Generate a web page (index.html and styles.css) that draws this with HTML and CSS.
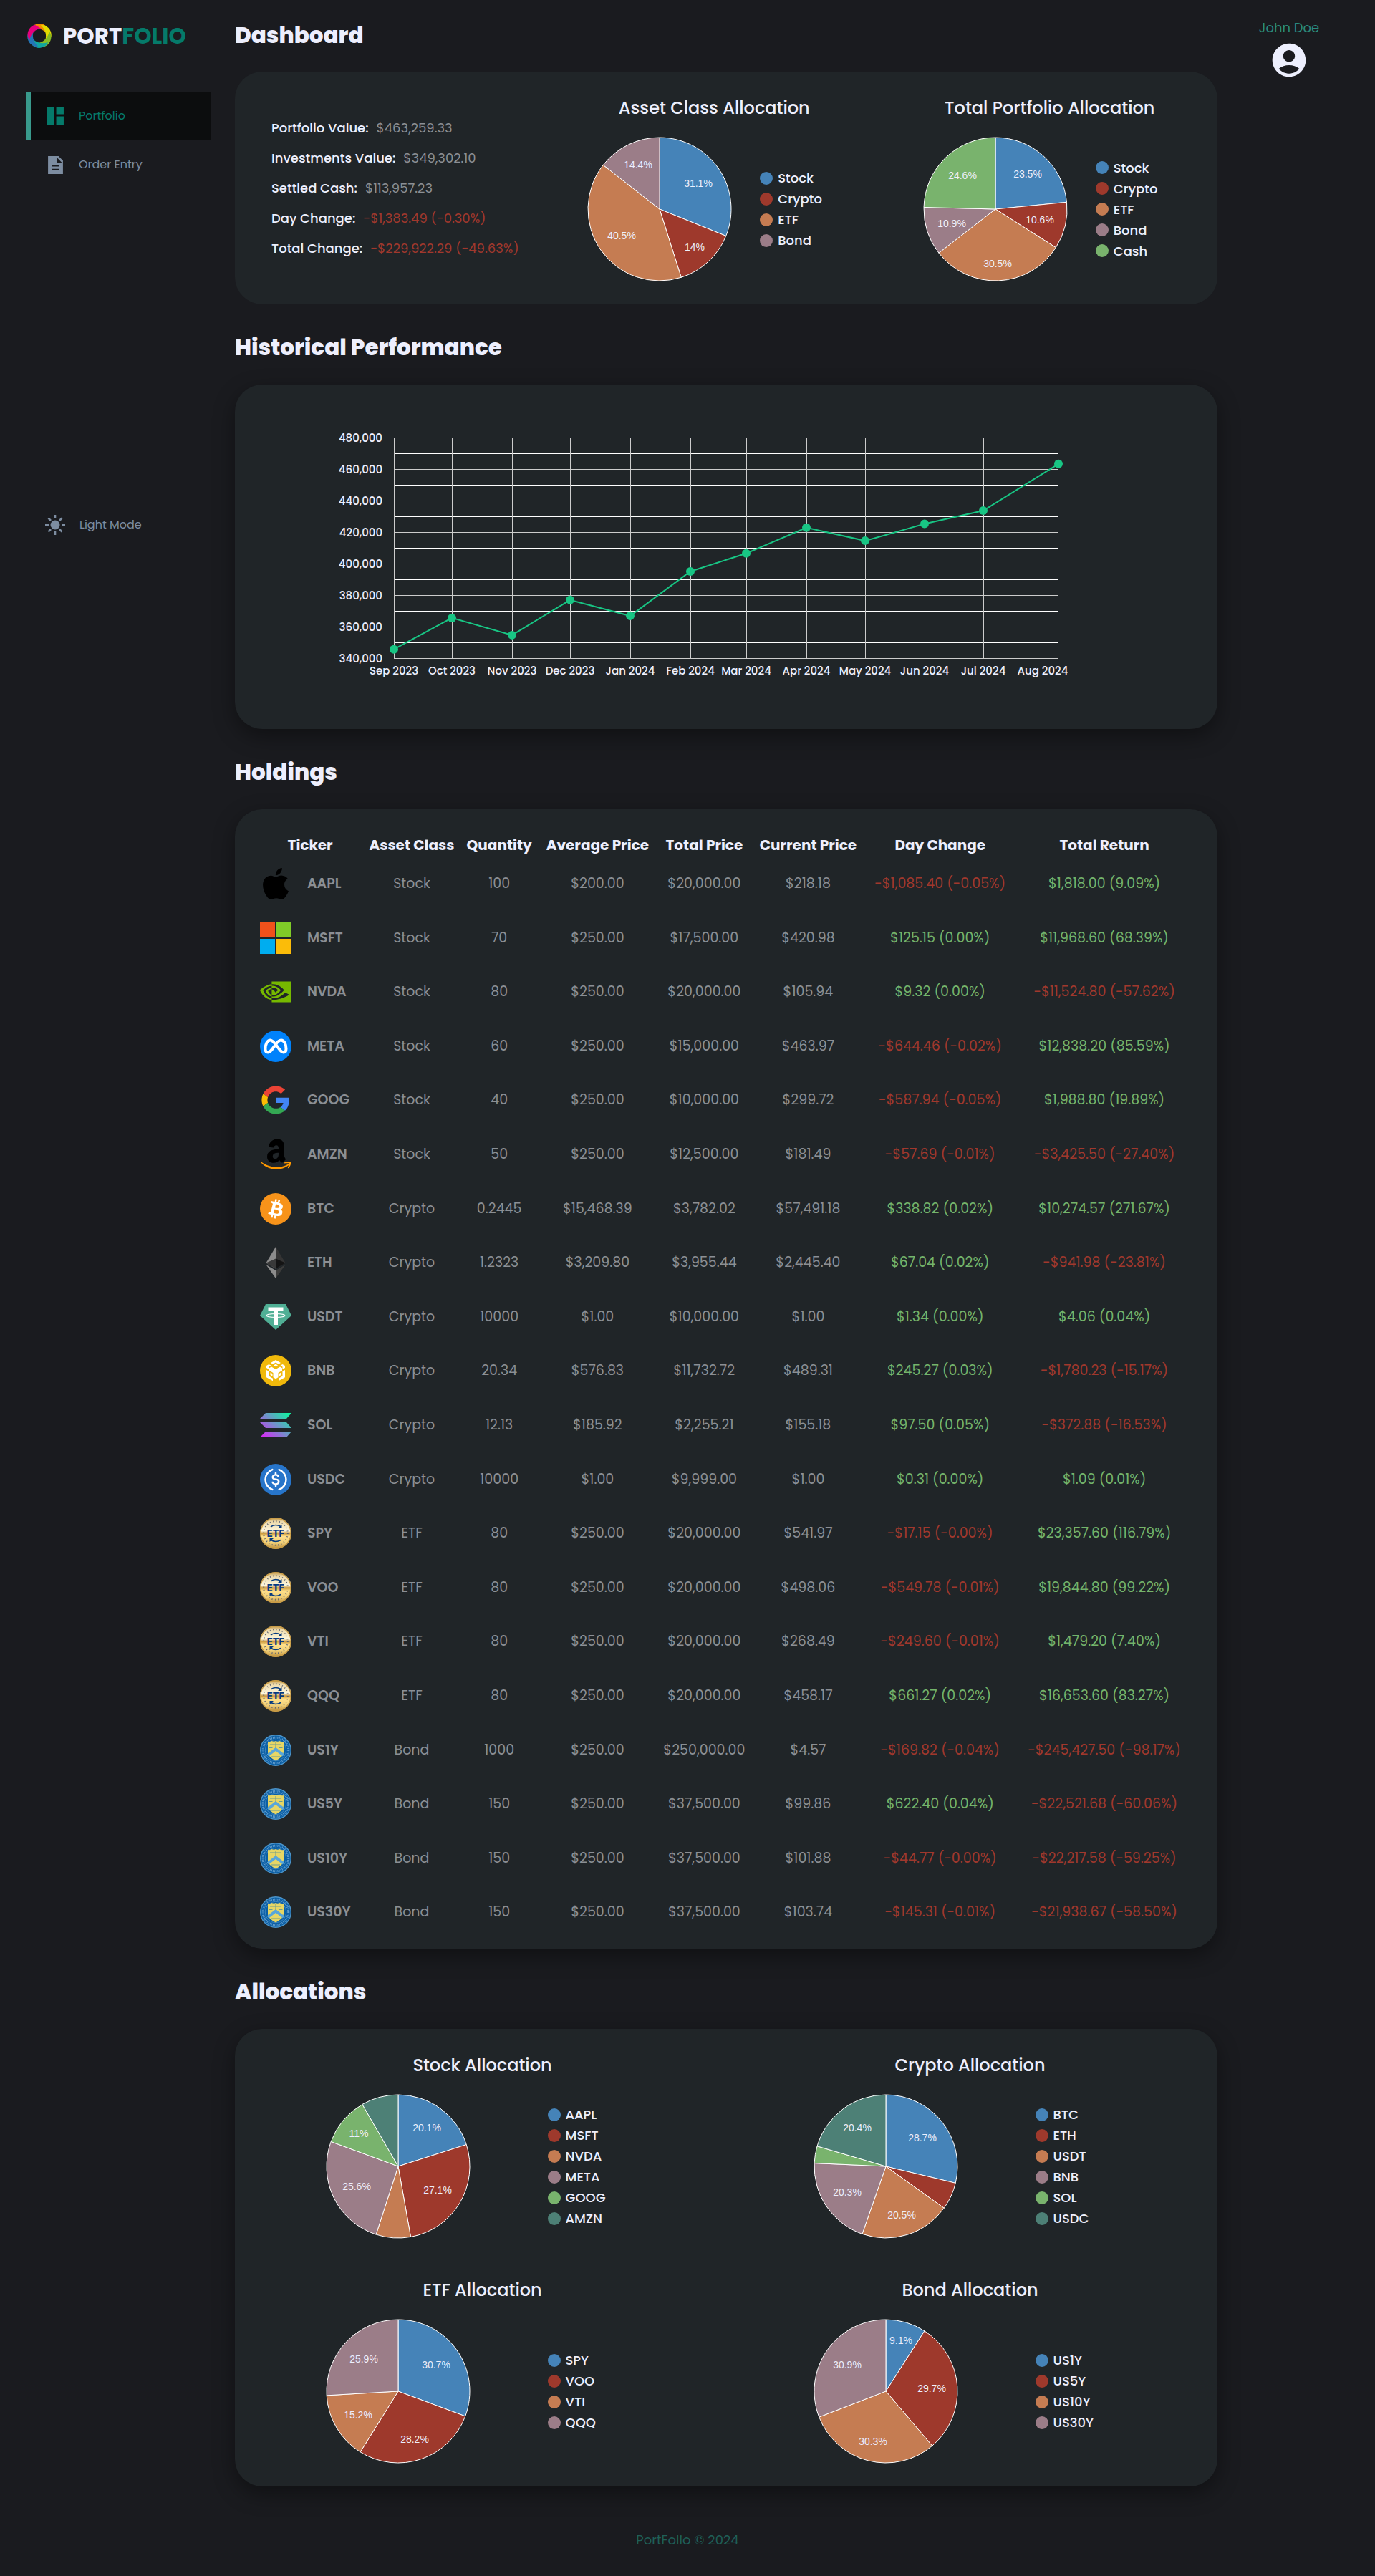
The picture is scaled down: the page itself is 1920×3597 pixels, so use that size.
FILE: index.html
```html
<!DOCTYPE html>
<html lang="en">
<head>
<meta charset="utf-8">
<meta name="viewport" content="width=device-width, initial-scale=1">
<title>PortFolio</title>
<link rel="stylesheet" href="styles.css">
</head>
<body>
<svg class="fills" aria-hidden="true">
  <defs>
    <linearGradient id="gold-top" x1="0" y1="0" x2="0" y2="1"><stop offset="0" stop-color="#b98a35"/><stop offset=".25" stop-color="#ecd9ab"/><stop offset=".85" stop-color="#fdf6dc"/><stop offset="1" stop-color="#c9983f"/></linearGradient>
    <linearGradient id="gold-bottom" x1="0" y1="0" x2="0" y2="1"><stop offset="0" stop-color="#c8963a"/><stop offset=".2" stop-color="#ffe08a"/><stop offset=".6" stop-color="#f0cf78"/><stop offset="1" stop-color="#b98a35"/></linearGradient>
    <linearGradient id="sol-fill" gradientUnits="userSpaceOnUse" x1="6" y1="40" x2="38" y2="4"><stop offset="0" stop-color="#d62bf5"/><stop offset="1" stop-color="#10f2a0"/></linearGradient>
  </defs>
</svg>
<svg class="sprite" aria-hidden="true">
  <symbol id="i-aapl" viewBox="0 0 24 24"><path d="M12.152 6.896c-.948 0-2.415-1.078-3.96-1.04-2.04.027-3.91 1.183-4.961 3.014-2.117 3.675-.546 9.103 1.519 12.09 1.013 1.454 2.208 3.09 3.792 3.039 1.52-.065 2.09-.987 3.935-.987 1.831 0 2.35.987 3.96.948 1.637-.026 2.676-1.48 3.676-2.948 1.156-1.688 1.636-3.325 1.662-3.415-.039-.013-3.182-1.221-3.22-4.857-.026-3.04 2.48-4.494 2.597-4.559-1.429-2.09-3.623-2.324-4.39-2.376-2-.156-3.675 1.09-4.61 1.09zM15.53 3.83c.843-1.012 1.4-2.427 1.245-3.83-1.207.052-2.662.805-3.532 1.818-.78.896-1.454 2.338-1.273 3.714 1.338.104 2.715-.688 3.559-1.701"/></symbol>
  <symbol id="i-msft" viewBox="0 0 44 44"><path fill="#f1511b" d="M0 0h21v21H0z"/><path fill="#80cc28" d="M23 0h21v21H23z"/><path fill="#00adef" d="M0 23h21v21H0z"/><path fill="#fbbc09" d="M23 23h21v21H23z"/></symbol>
  <symbol id="i-nvda" viewBox="0 0 24 24"><path fill="#76b900" d="M8.948 8.798v-1.43a6.7 6.7 0 0 1 .424-.018c3.922-.124 6.493 3.374 6.493 3.374s-2.774 3.851-5.75 3.851c-.398 0-.787-.062-1.158-.185v-4.346c1.528.185 1.837.857 2.747 2.385l2.04-1.714s-1.492-1.952-4-1.952a6.016 6.016 0 0 0-.796.035m0-4.735v2.138l.424-.027c5.45-.185 9.01 4.47 9.01 4.47s-4.08 4.964-8.33 4.964c-.37 0-.733-.035-1.095-.097v1.325c.3.035.61.062.91.062 3.957 0 6.82-2.023 9.593-4.408.459.371 2.34 1.263 2.73 1.652-2.633 2.208-8.772 3.984-12.253 3.984-.335 0-.653-.018-.971-.053v1.864H24V4.063zm0 10.326v1.131c-3.657-.654-4.673-4.46-4.673-4.46s1.758-1.944 4.673-2.262v1.237H8.94c-1.528-.186-2.73 1.245-2.73 1.245s.68 2.412 2.739 3.11M2.456 10.9s2.164-3.197 6.5-3.533V6.201C4.153 6.59 0 10.653 0 10.653s2.35 6.802 8.948 7.42v-1.237c-4.84-.6-6.492-5.936-6.492-5.936z"/></symbol>
  <symbol id="i-meta" viewBox="0 0 44 44"><circle cx="22" cy="22" r="22" fill="#0082fb"/><path fill="none" stroke="#fff" stroke-width="4" stroke-linejoin="round" d="M22 19.500C25 15 27 13.500 29.500 13.500c4.500 0 7 6 7 12 0 3-1.200 5-3.700 5-3 0-4.500-2.500-10.800-11C18 14.500 16.500 13.500 14.500 13.500c-4.500 0-7 6-7 12 0 3 1.200 5 3.700 5 3 0 4.800-3 10.800-11z"/></symbol>
  <symbol id="i-goog" viewBox="-3 -3 54 54"><path fill="#ea4335" d="M24 9.500c3.540 0 6.710 1.220 9.210 3.600l6.850-6.850C35.900 2.380 30.470 0 24 0 14.620 0 6.510 5.380 2.560 13.220l7.980 6.190C12.430 13.720 17.740 9.500 24 9.500z"/><path fill="#4285f4" d="M46.980 24.550c0-1.570-.150-3.090-.380-4.550H24v9.020h12.940c-.580 2.960-2.260 5.480-4.780 7.180l7.730 6c4.510-4.180 7.090-10.360 7.090-17.650z"/><path fill="#fbbc05" d="M10.530 28.590c-.480-1.450-.760-2.990-.760-4.590s.270-3.140.760-4.590l-7.980-6.190C.920 16.460 0 20.120 0 24s.920 7.540 2.560 10.780l7.970-6.190z"/><path fill="#34a853" d="M24 48c6.480 0 11.930-2.130 15.890-5.810l-7.730-6c-2.150 1.450-4.920 2.300-8.160 2.300-6.260 0-11.570-4.220-13.470-9.910l-7.980 6.190C6.510 42.620 14.620 48 24 48z"/></symbol>
  <symbol id="i-amzn" viewBox="0 0 44 44"><path d="M26 14.500v-1.200c0-2.300-.700-4-3.200-4-2.200 0-3.300 1.300-3.700 3.300l-7.100-.800C12.800 4.500 18.200.500 24 .500c6.800 0 9.800 4 9.800 10.500v12c0 3.500 2.200 4.700 2.200 5.700 0 .8-4.300 4.800-5.200 4.800-1 0-2.700-1.900-3.600-3.500-2 2.400-4.400 3.800-8.200 3.800-5 0-9-3.200-9-8.600 0-7.800 7-10.400 16-10.700zm0 5.200c-4.500 0-8.200 1-8.200 5 0 2 1.200 3.600 3.300 3.600 3.600 0 4.900-3.600 4.900-6.600z"/><path fill="#ff9900" d="M2 32.500c12 9 27 9.200 37 3.300 1.300-.7 2 .5.900 1.400C29 45.500 12 45 1.500 33.500c-.8-.9-.2-1.500.5-1zM34 33.500c2-1.500 7-2 9-.9 1 1-.4 6.200-3.200 8.500-.7.500-1.200.1-.9-.6.800-2 2-5 1.500-5.800-.7-.8-4-.4-5.800-.2-.9.100-1.200-.5-.6-1z"/></symbol>
  <symbol id="i-btc" viewBox="0 0 32 32"><circle cx="16" cy="16" r="16" fill="#f7931a"/><path fill="#fff" d="M23.189 14.020c.314-2.096-1.283-3.223-3.465-3.975l.708-2.840-1.728-.430-.690 2.765c-.454-.114-.920-.220-1.385-.326l.695-2.783L15.596 6l-.708 2.839c-.376-.086-.746-.170-1.104-.260l.002-.009-2.384-.595-.460 1.846s1.283.294 1.256.312c.700.175.826.638.805 1.006l-.806 3.235c.048.012.110.030.180.057l-.183-.045-1.130 4.532c-.086.212-.303.531-.793.410.018.025-1.256-.313-1.256-.313l-.858 1.978 2.250.561c.418.105.828.215 1.231.318l-.715 2.872 1.727.430.708-2.840c.472.127.930.245 1.378.357l-.706 2.828 1.728.430.715-2.866c2.948.558 5.164.333 6.097-2.333.752-2.146-.037-3.385-1.588-4.192 1.130-.260 1.980-1.003 2.207-2.538zm-3.950 5.538c-.533 2.147-4.148.986-5.320.695l.950-3.805c1.172.293 4.929.872 4.370 3.110zm.535-5.569c-.487 1.953-3.495.960-4.470.717l.860-3.450c.975.243 4.118.696 3.610 2.733z"/></symbol>
  <symbol id="i-eth" viewBox="0 0 44 44"><path fill="#343434" d="M22 0l13.500 22.500L22 30.500z"/><path fill="#8c8c8c" d="M22 0L8.500 22.500 22 30.500z"/><path fill="#3c3c3b" d="M22 33v11l13.500-19z"/><path fill="#8c8c8c" d="M22 44V33L8.500 25z"/><path fill="#141414" d="M22 30.500l13.500-8L22 16.500z"/><path fill="#393939" d="M8.500 22.500l13.500 8v-14z"/></symbol>
  <symbol id="i-usdt" viewBox="0 0 44 44"><path fill="#50af95" d="M8 4h28l8 16-22 20L0 20z"/><path fill="#fff" d="M11.500 8.500h21v5.500H25v19h-6V14h-7.500z"/><ellipse cx="22" cy="20" rx="13" ry="2.500" fill="none" stroke="#fff" stroke-width="1.100"/></symbol>
  <symbol id="i-bnb" viewBox="0 0 44 44"><circle cx="22" cy="22" r="22" fill="#f0b90b"/><path fill="#fff" d="M22 7l7 4-3 1.800-4-2.300-4 2.300-3-1.800zM12.500 13l3 1.800-3 1.700V20L9 18v-3zM31.500 13l3.500 2v3l-3.500 2v-3.500l-3-1.700zM22 12.800l3 1.700-3 1.800-3-1.800zM16 16.500l6 3.400 6-3.400 3 1.800v3.500l-5.500 3.200v6.300L22 33.200l-3.500-1.900V25L13 21.800v-3.500zM9 21l3.500 2v6.500l5.500 3.200v3.600L9 31.200zM35 21v10.200l-9 5.100v-3.600l5.500-3.200V23zM14.500 24.500l3 1.800v3.500l-3-1.800zM29.500 24.500V28l-3 1.800v-3.500z"/></symbol>
  <symbol id="i-sol" viewBox="0 0 44 44"><path fill="url(#sol-fill)" d="M8 5h36l-7 8H0zM0 18h37l7 8H8zM8 31h36l-7 8H0z"/></symbol>
  <symbol id="i-usdc" viewBox="0 0 32 32"><circle cx="16" cy="16" r="16" fill="#2775ca"/><path fill="#fff" d="M20.022 18.124c0-2.124-1.280-2.852-3.840-3.156-1.828-.243-2.193-.728-2.193-1.578 0-.850.610-1.396 1.828-1.396 1.097 0 1.707.364 2.011 1.275a.458.458 0 0 0 .427.303h.975a.416.416 0 0 0 .427-.425v-.060a3.040 3.040 0 0 0-2.743-2.489V9.142c0-.243-.183-.425-.487-.486h-.915c-.243 0-.426.182-.487.486v1.396c-1.829.242-2.986 1.456-2.986 2.974 0 2.002 1.218 2.791 3.778 3.095 1.707.303 2.255.668 2.255 1.639 0 .970-.853 1.638-2.011 1.638-1.585 0-2.133-.667-2.316-1.578-.060-.242-.244-.364-.427-.364h-1.036a.416.416 0 0 0-.426.425v.060c.243 1.518 1.219 2.610 3.230 2.914v1.457c0 .242.183.425.487.485h.915c.243 0 .426-.182.487-.485V21.340c1.829-.303 3.047-1.578 3.047-3.217z"/><path fill="none" stroke="#fff" stroke-width="1.800" stroke-linecap="round" d="M12.600 5.900a10.700 10.700 0 0 0 0 20.200M19.400 5.900a10.700 10.700 0 0 1 0 20.200"/></symbol>
  <symbol id="i-etf" viewBox="0 0 44 44"><path fill="url(#gold-top)" d="M0 22a22 22 0 0 1 44 0z"/><path fill="url(#gold-bottom)" d="M0 22a22 22 0 0 0 44 0z"/><circle cx="22" cy="22" r="21.200" fill="none" stroke="#c99d48" stroke-width="1.400"/><circle cx="22" cy="22" r="16.800" fill="none" stroke="#5c6272" stroke-width="2" stroke-dasharray="1 3.400"/><path fill="none" stroke="#053a80" stroke-width="1.600" d="M15 13c4-3 9-3.200 14-.5M15 31c4 3 9 3.200 14 .5"/><path fill="#053a80" d="M30.500 10v5h-5.500zM13.500 34v-5H19z"/><text x="22" y="27" text-anchor="middle" class="coin-text">ETF</text></symbol>
  <symbol id="i-bond" viewBox="0 0 44 44"><circle cx="22" cy="22" r="21.300" fill="#0b5fa5" stroke="#4c93c8" stroke-width="1.400"/><circle cx="22" cy="22" r="17.800" fill="none" stroke="#5f9acb" stroke-width="3" stroke-dasharray="1.100 1.100"/><circle cx="22" cy="22" r="14.800" fill="#0b5fa5" stroke="#3f86bf" stroke-width="1"/><path fill="#e6d665" d="M11 10q3 1 5.500-1 3 1.600 5.500 0 2.500 1.600 5.500 0Q30 11 33 10v14c0 6-5 9-11 12.500C16 33 11 30 11 24z"/><path fill="none" stroke="#58a6da" stroke-width="4" d="M11 29l11-8.500L33 29"/><path fill="none" stroke="#6e9c8d" d="M14 14h16M22 11v8M12.500 18.500h5M26.500 18.500h5M16 31h12"/></symbol>
</svg>

<div class="layout">
  <aside class="sidebar">
    <a class="brand" href="#">
      <svg class="brand-mark" viewBox="-18 -18 36 36" aria-hidden="true">
        <path fill="#f28c00" d="M-12-9C-9-17 3-20 10-13L10-3C6-9-3-12-12-9z"/>
        <path fill="#e3dc00" transform="rotate(60)" d="M-12-9C-9-17 3-20 10-13L10-3C6-9-3-12-12-9z"/>
        <path fill="#86bc25" transform="rotate(120)" d="M-12-9C-9-17 3-20 10-13L10-3C6-9-3-12-12-9z"/>
        <path fill="#10a5a0" transform="rotate(180)" d="M-12-9C-9-17 3-20 10-13L10-3C6-9-3-12-12-9z"/>
        <path fill="#2474b5" transform="rotate(240)" d="M-12-9C-9-17 3-20 10-13L10-3C6-9-3-12-12-9z"/>
        <path fill="#e5007d" transform="rotate(300)" d="M-12-9C-9-17 3-20 10-13L10-3C6-9-3-12-12-9z"/>
      </svg>
      <span class="brand-name">PORT<span class="accent">FOLIO</span></span>
    </a>
    <nav class="nav">
      <a class="nav-item active" href="#" aria-current="page"><svg viewBox="0 0 24 24" aria-hidden="true"><path d="M0 0h10v24H0zM13 0h10v9H13zM13 12h10v12H13z"/></svg>Portfolio</a>
      <a class="nav-item" href="#"><svg viewBox="-2 0 24 24" aria-hidden="true"><path fill-rule="evenodd" d="M0 0h14l6 6v18H0zM12 2v7h7zM5 12v2h10v-2zM5 17v2h10v-2z"/></svg>Order Entry</a>
    </nav>
    <button class="nav-item mode" type="button"><svg viewBox="-14 -14 28 28" aria-hidden="true"><circle r="6.500"/><path fill="none" stroke="currentColor" stroke-width="2.600" d="M0-14v5M0 14V9M-14 0h5M14 0H9M-9.500-9.500l3.500 3.500M9.500-9.500L6-6M-9.500 9.500L-6 6M9.500 9.500L6 6"/></svg>Light Mode</button>
  </aside>

  <main class="main">
    <h1>Dashboard</h1>
    <section class="card summary">
      <dl class="stats">
        <div><dt>Portfolio Value:</dt><dd>$463,259.33</dd></div>
        <div><dt>Investments Value:</dt><dd>$349,302.10</dd></div>
        <div><dt>Settled Cash:</dt><dd>$113,957.23</dd></div>
        <div><dt>Day Change:</dt><dd class="down">-$1,383.49 (-0.30%)</dd></div>
        <div><dt>Total Change:</dt><dd class="down">-$229,922.29 (-49.63%)</dd></div>
      </dl>
      <figure class="chart">
        <figcaption>Asset Class Allocation</figcaption>
        <div class="chart-body">
          <svg class="pie" viewBox="-101 -101 202 202" data-values="108663,48909,141335,50394"></svg>
          <ul class="legend"><li>Stock</li><li>Crypto</li><li>ETF</li><li>Bond</li></ul>
        </div>
      </figure>
      <figure class="chart">
        <figcaption>Total Portfolio Allocation</figcaption>
        <div class="chart-body">
          <svg class="pie" viewBox="-101 -101 202 202" data-values="108663,48909,141335,50394,113957"></svg>
          <ul class="legend"><li>Stock</li><li>Crypto</li><li>ETF</li><li>Bond</li><li>Cash</li></ul>
        </div>
      </figure>
    </section>

    <h2>Historical Performance</h2>
    <section class="card history">
      <svg class="line-chart" viewBox="0 0 1100 360" role="img" aria-label="Portfolio value by month"></svg>
    </section>

    <h2>Holdings</h2>
    <section class="card holdings">
      <table>
        <colgroup><col class="c-ticker"><col class="c-class"><col class="c-qty"><col class="c-avg"><col class="c-total"><col class="c-current"><col class="c-day"><col class="c-return"></colgroup>
        <thead><tr><th>Ticker</th><th>Asset Class</th><th>Quantity</th><th>Average Price</th><th>Total Price</th><th>Current Price</th><th>Day Change</th><th>Total Return</th></tr></thead>
        <tbody>
          <tr><th scope="row"><span><svg><use href="#i-aapl"/></svg>AAPL</span></th><td>Stock</td><td>100</td><td>$200.00</td><td>$20,000.00</td><td>$218.18</td><td class="down">-$1,085.40 (-0.05%)</td><td class="up">$1,818.00 (9.09%)</td></tr>
          <tr><th scope="row"><span><svg><use href="#i-msft"/></svg>MSFT</span></th><td>Stock</td><td>70</td><td>$250.00</td><td>$17,500.00</td><td>$420.98</td><td class="up">$125.15 (0.00%)</td><td class="up">$11,968.60 (68.39%)</td></tr>
          <tr><th scope="row"><span><svg><use href="#i-nvda"/></svg>NVDA</span></th><td>Stock</td><td>80</td><td>$250.00</td><td>$20,000.00</td><td>$105.94</td><td class="up">$9.32 (0.00%)</td><td class="down">-$11,524.80 (-57.62%)</td></tr>
          <tr><th scope="row"><span><svg><use href="#i-meta"/></svg>META</span></th><td>Stock</td><td>60</td><td>$250.00</td><td>$15,000.00</td><td>$463.97</td><td class="down">-$644.46 (-0.02%)</td><td class="up">$12,838.20 (85.59%)</td></tr>
          <tr><th scope="row"><span><svg><use href="#i-goog"/></svg>GOOG</span></th><td>Stock</td><td>40</td><td>$250.00</td><td>$10,000.00</td><td>$299.72</td><td class="down">-$587.94 (-0.05%)</td><td class="up">$1,988.80 (19.89%)</td></tr>
          <tr><th scope="row"><span><svg><use href="#i-amzn"/></svg>AMZN</span></th><td>Stock</td><td>50</td><td>$250.00</td><td>$12,500.00</td><td>$181.49</td><td class="down">-$57.69 (-0.01%)</td><td class="down">-$3,425.50 (-27.40%)</td></tr>
          <tr><th scope="row"><span><svg><use href="#i-btc"/></svg>BTC</span></th><td>Crypto</td><td>0.2445</td><td>$15,468.39</td><td>$3,782.02</td><td>$57,491.18</td><td class="up">$338.82 (0.02%)</td><td class="up">$10,274.57 (271.67%)</td></tr>
          <tr><th scope="row"><span><svg><use href="#i-eth"/></svg>ETH</span></th><td>Crypto</td><td>1.2323</td><td>$3,209.80</td><td>$3,955.44</td><td>$2,445.40</td><td class="up">$67.04 (0.02%)</td><td class="down">-$941.98 (-23.81%)</td></tr>
          <tr><th scope="row"><span><svg><use href="#i-usdt"/></svg>USDT</span></th><td>Crypto</td><td>10000</td><td>$1.00</td><td>$10,000.00</td><td>$1.00</td><td class="up">$1.34 (0.00%)</td><td class="up">$4.06 (0.04%)</td></tr>
          <tr><th scope="row"><span><svg><use href="#i-bnb"/></svg>BNB</span></th><td>Crypto</td><td>20.34</td><td>$576.83</td><td>$11,732.72</td><td>$489.31</td><td class="up">$245.27 (0.03%)</td><td class="down">-$1,780.23 (-15.17%)</td></tr>
          <tr><th scope="row"><span><svg><use href="#i-sol"/></svg>SOL</span></th><td>Crypto</td><td>12.13</td><td>$185.92</td><td>$2,255.21</td><td>$155.18</td><td class="up">$97.50 (0.05%)</td><td class="down">-$372.88 (-16.53%)</td></tr>
          <tr><th scope="row"><span><svg><use href="#i-usdc"/></svg>USDC</span></th><td>Crypto</td><td>10000</td><td>$1.00</td><td>$9,999.00</td><td>$1.00</td><td class="up">$0.31 (0.00%)</td><td class="up">$1.09 (0.01%)</td></tr>
          <tr><th scope="row"><span><svg><use href="#i-etf"/></svg>SPY</span></th><td>ETF</td><td>80</td><td>$250.00</td><td>$20,000.00</td><td>$541.97</td><td class="down">-$17.15 (-0.00%)</td><td class="up">$23,357.60 (116.79%)</td></tr>
          <tr><th scope="row"><span><svg><use href="#i-etf"/></svg>VOO</span></th><td>ETF</td><td>80</td><td>$250.00</td><td>$20,000.00</td><td>$498.06</td><td class="down">-$549.78 (-0.01%)</td><td class="up">$19,844.80 (99.22%)</td></tr>
          <tr><th scope="row"><span><svg><use href="#i-etf"/></svg>VTI</span></th><td>ETF</td><td>80</td><td>$250.00</td><td>$20,000.00</td><td>$268.49</td><td class="down">-$249.60 (-0.01%)</td><td class="up">$1,479.20 (7.40%)</td></tr>
          <tr><th scope="row"><span><svg><use href="#i-etf"/></svg>QQQ</span></th><td>ETF</td><td>80</td><td>$250.00</td><td>$20,000.00</td><td>$458.17</td><td class="up">$661.27 (0.02%)</td><td class="up">$16,653.60 (83.27%)</td></tr>
          <tr><th scope="row"><span><svg><use href="#i-bond"/></svg>US1Y</span></th><td>Bond</td><td>1000</td><td>$250.00</td><td>$250,000.00</td><td>$4.57</td><td class="down">-$169.82 (-0.04%)</td><td class="down">-$245,427.50 (-98.17%)</td></tr>
          <tr><th scope="row"><span><svg><use href="#i-bond"/></svg>US5Y</span></th><td>Bond</td><td>150</td><td>$250.00</td><td>$37,500.00</td><td>$99.86</td><td class="up">$622.40 (0.04%)</td><td class="down">-$22,521.68 (-60.06%)</td></tr>
          <tr><th scope="row"><span><svg><use href="#i-bond"/></svg>US10Y</span></th><td>Bond</td><td>150</td><td>$250.00</td><td>$37,500.00</td><td>$101.88</td><td class="down">-$44.77 (-0.00%)</td><td class="down">-$22,217.58 (-59.25%)</td></tr>
          <tr><th scope="row"><span><svg><use href="#i-bond"/></svg>US30Y</span></th><td>Bond</td><td>150</td><td>$250.00</td><td>$37,500.00</td><td>$103.74</td><td class="down">-$145.31 (-0.01%)</td><td class="down">-$21,938.67 (-58.50%)</td></tr>
        </tbody>
      </table>
    </section>

    <h2>Allocations</h2>
    <section class="card allocations">
      <figure class="chart wide">
        <figcaption>Stock Allocation</figcaption>
        <div class="chart-body">
          <svg class="pie" viewBox="-101 -101 202 202" data-values="21818,29469,8475,27838,11989,9075"></svg>
          <ul class="legend"><li>AAPL</li><li>MSFT</li><li>NVDA</li><li>META</li><li>GOOG</li><li>AMZN</li></ul>
        </div>
      </figure>
      <figure class="chart wide">
        <figcaption>Crypto Allocation</figcaption>
        <div class="chart-body">
          <svg class="pie" viewBox="-101 -101 202 202" data-values="14057,3013,10004,9952,1882,10000"></svg>
          <ul class="legend"><li>BTC</li><li>ETH</li><li>USDT</li><li>BNB</li><li>SOL</li><li>USDC</li></ul>
        </div>
      </figure>
      <figure class="chart wide">
        <figcaption>ETF Allocation</figcaption>
        <div class="chart-body">
          <svg class="pie" viewBox="-101 -101 202 202" data-values="43358,39845,21479,36654"></svg>
          <ul class="legend"><li>SPY</li><li>VOO</li><li>VTI</li><li>QQQ</li></ul>
        </div>
      </figure>
      <figure class="chart wide">
        <figcaption>Bond Allocation</figcaption>
        <div class="chart-body">
          <svg class="pie" viewBox="-101 -101 202 202" data-values="4573,14978,15282,15561"></svg>
          <ul class="legend"><li>US1Y</li><li>US5Y</li><li>US10Y</li><li>US30Y</li></ul>
        </div>
      </figure>
    </section>
  </main>

  <aside class="profile">
    <span>John Doe</span>
    <button type="button" aria-label="Account"><svg viewBox="0 0 24 24" aria-hidden="true"><path d="M12 2C6.480 2 2 6.480 2 12s4.480 10 10 10 10-4.480 10-10S17.520 2 12 2zm0 4c1.930 0 3.500 1.570 3.500 3.500S13.930 13 12 13s-3.500-1.570-3.500-3.500S10.070 6 12 6zm0 14c-2.030 0-4.430-.820-6.140-2.880C7.550 15.800 9.680 15 12 15s4.450.800 6.140 2.120C16.430 19.180 14.030 20 12 20z"/></svg></button>
  </aside>
</div>
<footer class="footer">PortFolio © 2024</footer>
<script src="charts.js"></script>
</body>
</html>
```
FILE: styles.css
```css
:root {
  --bg: #1a1b1f;
  --card: #202528;
  --text: #edeffd;
  --muted: #8b8f94;
  --nav: #7d8da1;
  --teal: #057a6a;
  --teal-light: #2b8c7c;
  --red: #a0382d;
  --green-text: #74b46b;
  --s1: #4583b8;
  --s2: #9e392c;
  --s3: #c57c52;
  --s4: #9b7d88;
  --s5: #79b36d;
  --s6: #4d8076;
}

* { box-sizing: border-box; margin: 0; padding: 0; }

body {
  background: var(--bg);
  color: var(--text);
  font: 18px/28px Poppins, Inter, sans-serif;
}

a { color: inherit; text-decoration: none; }
button { border: 0; background: none; color: inherit; font: inherit; cursor: pointer; }
ul { list-style: none; }
.fills { display: block; width: 0; height: 0; }
.sprite { display: none; }

.layout {
  display: grid;
  grid-template-columns: 257px minmax(0, 1fr) 132px;
  column-gap: 34px;
  padding: 25px 54px 0 37px;
}

/* sidebar */
.brand { display: flex; align-items: center; gap: 15px; height: 50px; }
.brand-mark { width: 36px; height: 36px; }
.brand-name { font-size: 31px; font-weight: 700; }
.accent { color: var(--teal); }
.nav { margin-top: 53px; }
.nav-item {
  display: flex;
  align-items: center;
  gap: 20px;
  width: 100%;
  height: 68px;
  padding-left: 28px;
  color: var(--nav);
  font-size: 16px;
}
.nav-item svg { width: 25px; height: 25px; fill: currentColor; }
.nav-item.active {
  padding-left: 22px;
  border-left: 6px solid #399a8c;
  background: #0c0d0e;
  color: var(--teal);
}
.mode { margin-top: 435px; padding-left: 26px; }
.mode svg { width: 28px; height: 28px; }

/* main column */
h1, h2 { font-size: 31px; line-height: 48px; font-weight: 800; }
h1 { margin-bottom: 27px; }
h2 { margin: 36px 0 28px; }
.card {
  border-radius: 38px;
  background: var(--card);
  box-shadow: 0 10px 30px rgba(0, 0, 0, 0.4);
}

.summary {
  display: grid;
  grid-template-columns: 13fr 14fr 14fr;
  box-shadow: none;
}
.stats {
  display: flex;
  flex-direction: column;
  justify-content: center;
  gap: 14px;
  padding-left: 51px;
  white-space: nowrap;
}
.stats div { display: flex; gap: 11px; }
.stats dt { font-weight: 500; }
.stats dd { color: var(--muted); }
.stats dd.down, td.down { color: var(--red); }
td.up { color: var(--green-text); }

.chart {
  display: flex;
  flex-direction: column;
  align-items: center;
  padding: 33px 0 32px;
}
.chart figcaption { font-size: 24px; line-height: 36px; font-weight: 500; margin-bottom: 22px; }
.chart-body { display: flex; align-items: center; gap: 39px; width: 354px; }
.pie { width: 202px; height: 202px; overflow: visible; }
.pie path { stroke: #fff; stroke-width: 1; }
.pie text {
  font: 14px "Liberation Sans", Arial, sans-serif;
  fill: var(--text);
  text-anchor: middle;
}
.legend { font-weight: 500; line-height: 29px; }
.legend li { display: flex; align-items: center; gap: 7px; }
.legend li::before { content: ""; width: 18px; height: 18px; border-radius: 50%; background: var(--s1); }
.legend li:nth-child(2)::before { background: var(--s2); }
.legend li:nth-child(3)::before { background: var(--s3); }
.legend li:nth-child(4)::before { background: var(--s4); }
.legend li:nth-child(5)::before { background: var(--s5); }
.legend li:nth-child(6)::before { background: var(--s6); }

.history { padding: 56px 0 65px; }
.line-chart { display: block; width: 100%; height: 360px; }
.line-chart text { fill: var(--text); font-size: 15px; font-weight: 500; }
.line-chart .x { text-anchor: middle; }
.line-chart .y { text-anchor: end; }
.line-chart .grid { stroke: #ccc; shape-rendering: crispEdges; }
.line-chart .minor { stroke: #fff; shape-rendering: crispEdges; }
.line-chart polyline { fill: none; stroke: #18c584; stroke-width: 2; }
.line-chart circle { fill: #18c584; }

.holdings { padding: 36px 35px 13px 30px; }
table { width: 100%; table-layout: fixed; border-collapse: collapse; text-align: center; white-space: nowrap; }
thead th { height: 30px; font-size: 20px; font-weight: 700; vertical-align: top; }
tbody td, tbody th { height: 76px; color: var(--muted); font-size: 19px; }
tbody tr:nth-child(5n + 2) > *, tbody tr:nth-child(5n + 4) > * { height: 75px; }
tbody th { font-weight: 600; }
tbody th span { display: flex; align-items: center; gap: 22px; padding-left: 5px; }
tbody th svg { width: 44px; height: 44px; }
.coin-text { font: 800 13px Inter, sans-serif; fill: #053a80; }
.c-ticker { width: 11.5%; }
.c-class { width: 10.2%; }
.c-qty { width: 8.5%; }
.c-avg { width: 12.5%; }
.c-total { width: 10.3%; }
.c-current { width: 11.9%; }
.c-day { width: 16.3%; }
.c-return { width: 18.8%; }

.allocations { display: grid; grid-template-columns: 1fr 1fr; padding: 0 5px; }
.chart.wide:nth-child(n + 3) { padding-top: 22px; }
.wide .chart-body { width: 438px; gap: 108px; }

/* profile column */
.profile { text-align: center; }
.profile span { display: block; color: var(--teal-light); }
.profile button { display: block; margin: 3px auto 0; }
.profile svg { display: block; width: 56px; height: 56px; fill: var(--text); }

.footer { padding: 61px 0 37px; text-align: center; color: #1f5f57; }
```
FILE: charts.js
```js
const NS = 'http://www.w3.org/2000/svg';
const COLORS = ['#4583b8', '#9e392c', '#c57c52', '#9b7d88', '#79b36d', '#4d8076'];

function add(parent, name, attrs, text) {
  const el = document.createElementNS(NS, name);
  for (const key in attrs) el.setAttribute(key, attrs[key]);
  if (text) el.textContent = text;
  parent.appendChild(el);
}

// Pie charts: slices run clockwise from the top, labels sit near the rim.
document.querySelectorAll('.pie').forEach((svg) => {
  const values = svg.dataset.values.split(',').map(Number);
  const total = values.reduce((a, b) => a + b, 0);
  const labels = [];
  let angle = 0;
  values.forEach((value, i) => {
    const share = value / total;
    const end = angle + share * 2 * Math.PI;
    const p = (a) => (100 * Math.sin(a)).toFixed(2) + ' ' + (-100 * Math.cos(a)).toFixed(2);
    add(svg, 'path', {
      fill: COLORS[i],
      d: `M0 0L${p(angle)}A100 100 0 ${share > 0.5 ? 1 : 0} 1 ${p(end)}Z`
    });
    if (share > 0.09) {
      const mid = (angle + end) / 2;
      const label = parseFloat((share * 100).toFixed(1)) + '%';
      const hw = label.length * 4;
      const hh = 6;
      const ux = Math.sin(mid);
      const uy = -Math.cos(mid);
      // distance at which the label's outer corner reaches radius 85
      const b = Math.abs(ux) * hw + Math.abs(uy) * hh;
      const r = -b + Math.sqrt(b * b - hw * hw - hh * hh + 85 * 85);
      labels.push({ x: Math.round(r * ux), y: Math.round(r * uy + 5), label });
    }
    angle = end;
  });
  labels.forEach((l) => add(svg, 'text', { x: l.x, y: l.y }, l.label));
});

// Line chart
const chart = document.querySelector('.line-chart');
const LEFT = 86, RIGHT = 1014, TOP = 18, STEP = 22;
const months = [
  ['Sep 2023', 86, 345600], ['Oct 2023', 167, 365500], ['Nov 2023', 251, 354600],
  ['Dec 2023', 332, 376900], ['Jan 2024', 416, 366800], ['Feb 2024', 500, 395000],
  ['Mar 2024', 578, 406500], ['Apr 2024', 662, 422800], ['May 2024', 744, 414500],
  ['Jun 2024', 827, 425200], ['Jul 2024', 909, 433600], ['Aug 2024', 992, null]
];
for (let i = 0; i <= 14; i++) {
  const y = TOP + i * STEP;
  add(chart, 'line', { class: i % 2 ? 'minor' : 'grid', x1: LEFT, x2: RIGHT, y1: y, y2: y });
  if (i % 2 === 0) {
    add(chart, 'text', { class: 'y', x: LEFT - 16, y: y + 6 }, (480 - i * 10) + ',000');
  }
}
months.forEach(([name, x]) => {
  add(chart, 'line', { class: 'grid', x1: x, x2: x, y1: TOP, y2: TOP + 14 * STEP });
  add(chart, 'text', { class: 'x', x, y: 349 }, name);
});
const points = months.filter((m) => m[2]).map((m) => [m[1], m[2]]);
points.push([RIGHT, 463259]);
const coords = points.map(([x, v]) => [x, TOP + ((480000 - v) / 10000) * STEP]);
add(chart, 'polyline', { points: coords.map((c) => c.join(',')).join(' ') });
coords.forEach(([cx, cy]) => add(chart, 'circle', { cx, cy, r: 6 }));
```
